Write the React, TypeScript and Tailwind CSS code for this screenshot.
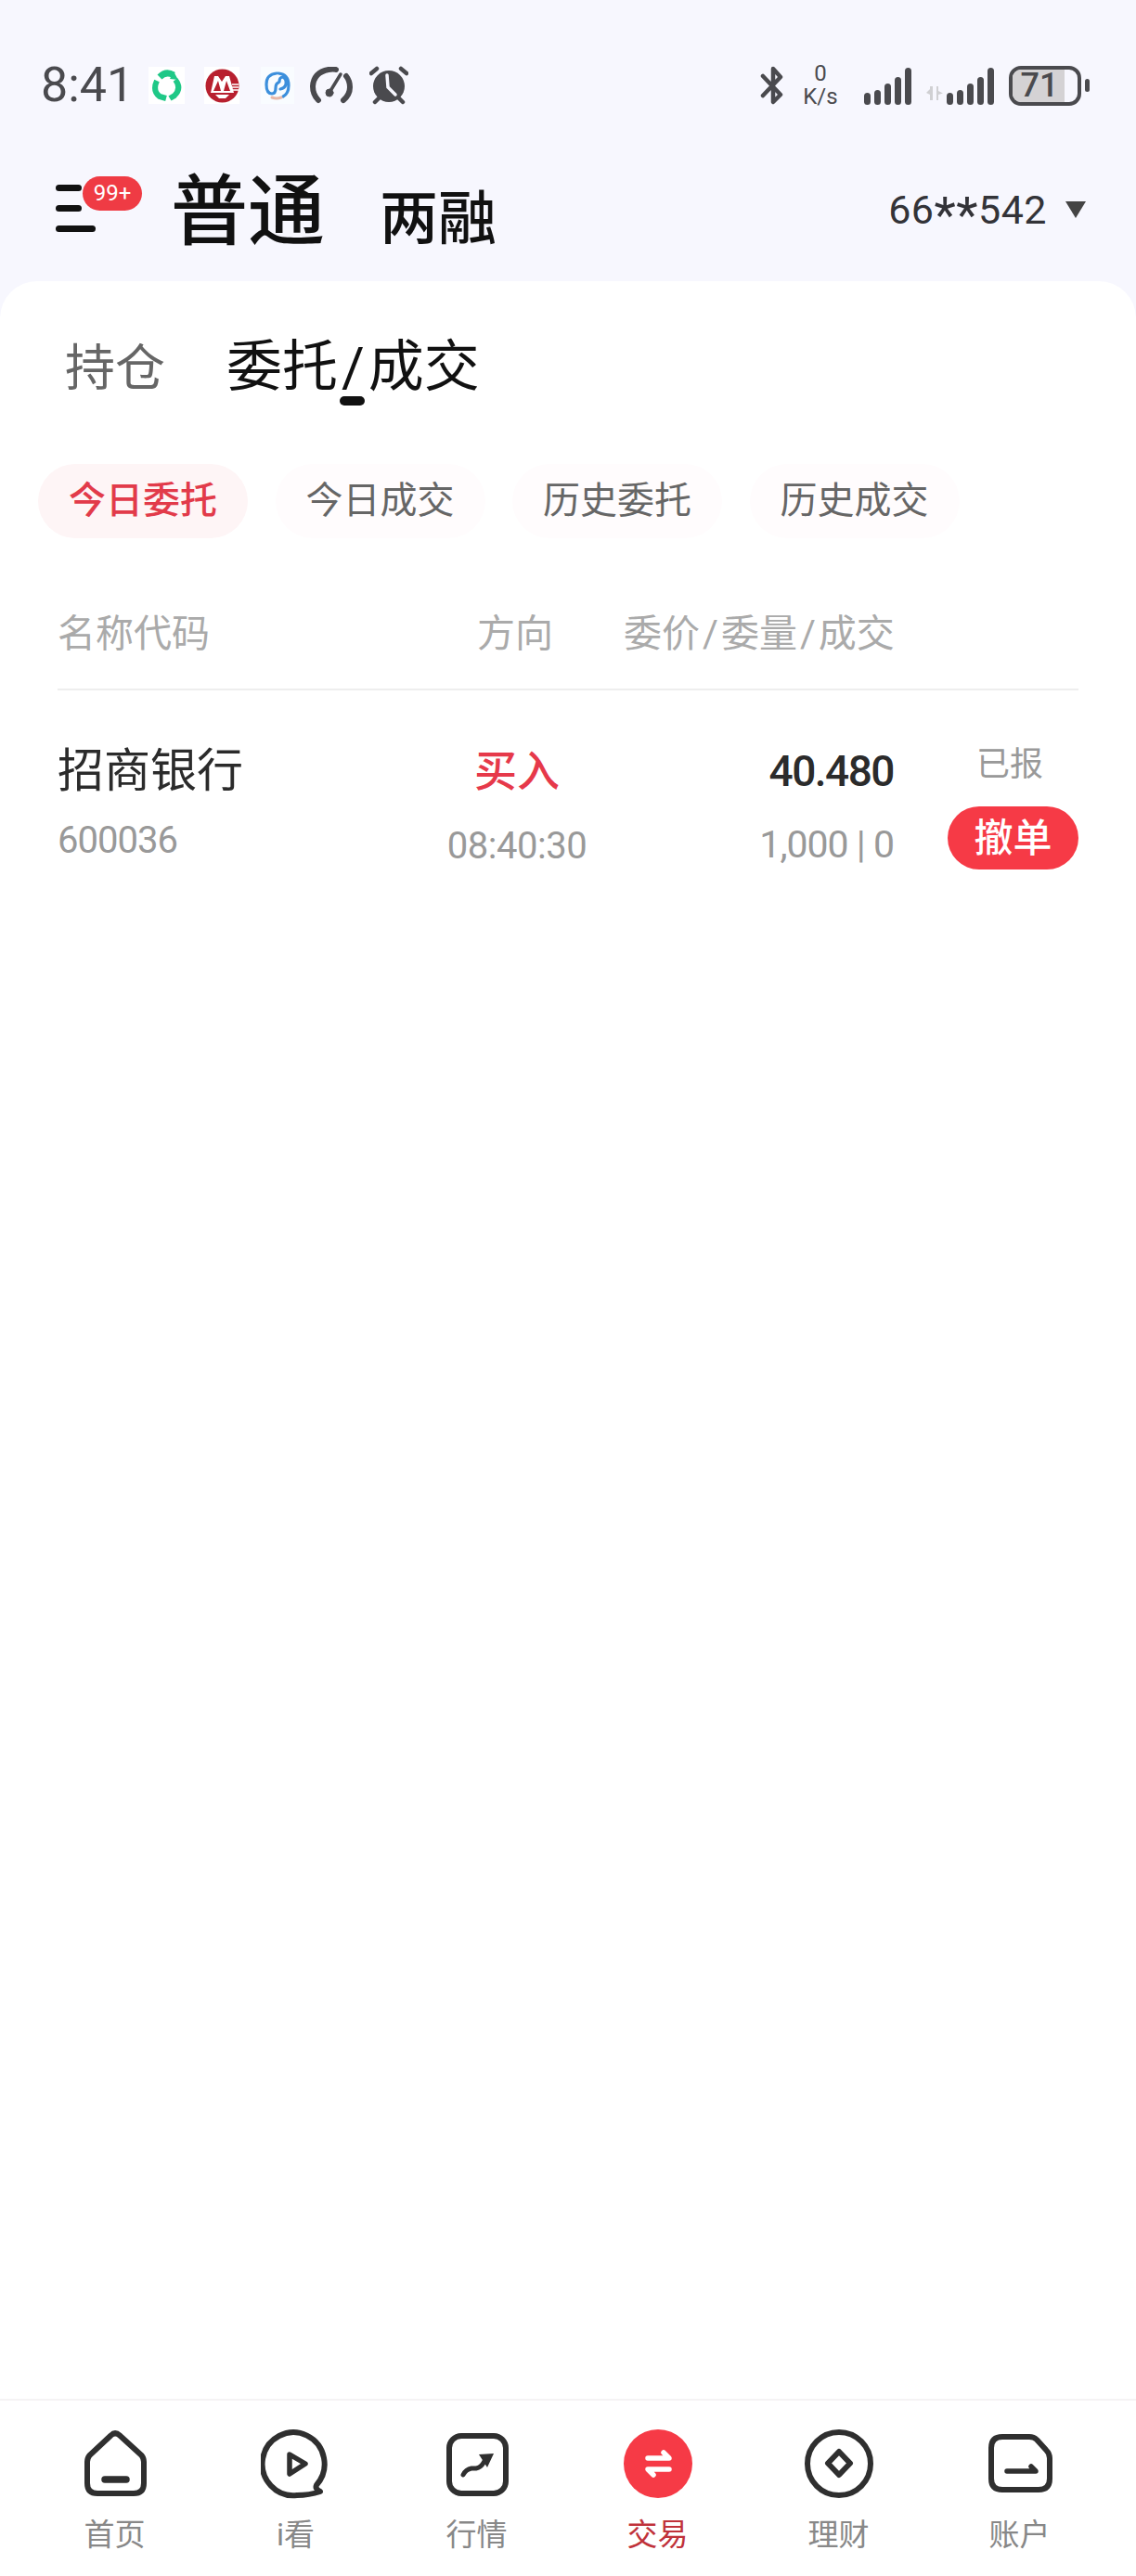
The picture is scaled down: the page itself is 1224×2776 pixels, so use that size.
import React from 'react';

function GreenLogo() {
  return (
    <div className="w-[39px] h-[40px] bg-white flex items-center justify-center">
      <svg width="34" height="36" viewBox="0 0 34 36" fill="none" stroke="#1fc887" strokeLinecap="butt">
        <path d="M9 9 Q16 2 24 7" strokeWidth="7" />
        <path d="M26 12 Q33 21 25 29 L20 32" strokeWidth="6" />
        <path d="M6 13 Q1 24 9 30 L16 32" strokeWidth="6" />
        <path d="M24 3 L29 12 L20 11 Z" fill="#1fc887" stroke="none" />
      </svg>
    </div>
  );
}

function CmbLogo() {
  return (
    <div className="w-[38px] h-[40px] bg-white flex items-center justify-center">
      <svg width="37" height="37" viewBox="0 0 37 37">
        <circle cx="18.5" cy="18.5" r="18" fill="#b8202f" />
        <path d="M10 8 H14 L18 14 L22 8 H26 L31 26 H6 Z" fill="#fff" />
        <path d="M9 24 L14 13 L17 24 Z M20 24 L23 13 L27 24 Z" fill="#b8202f" />
        <path d="M11 28 H26 L22 32 H15 Z" fill="#fff" />
        <path d="M29 17 H36 M29 20 H36 M30 23 H36" stroke="#fff" strokeWidth="1.3" />
      </svg>
    </div>
  );
}

function BlueLogo() {
  return (
    <div className="w-[36px] h-[40px] bg-[#f9fcff] flex items-center justify-center">
      <svg width="32" height="34" viewBox="0 0 32 34" fill="none" strokeLinecap="round">
        <path d="M15 4 Q4 5 4 16 Q4 26 10 26 Q14 26 14 20 Q14 15 17 14" stroke="#3c8fdc" strokeWidth="3.2" />
        <path d="M17 4 Q28 5 28 17 Q28 26 22 29 M22 8 Q18 8 18 13 M22 8 Q26 10 25 16 Q24 20 19 21" stroke="#3c8fdc" strokeWidth="3.2" />
        <path d="M10 30 Q15 32 20 30" stroke="#e8b8a8" strokeWidth="3" />
      </svg>
    </div>
  );
}

function Gauge() {
  return (
    <svg width="46" height="40" viewBox="0 0 46 40" fill="none" stroke="#4a4a4e" strokeLinecap="round">
      <path d="M9 36 Q3 30 3 21 Q4 6 20 3 Q25 2 28 3" strokeWidth="6" />
      <path d="M39 10 Q43 15 43 22 Q43 30 36 36" strokeWidth="6" />
      <path d="M22 26 L33 8" strokeWidth="3.5" />
      <circle cx="21" cy="28" r="4" fill="#4a4a4e" strokeWidth="1" />
    </svg>
  );
}

function Alarm() {
  return (
    <svg width="42" height="42" viewBox="0 0 42 42" fill="none" strokeLinecap="round">
      <circle cx="21" cy="22" r="17" fill="#4a4a4e" />
      <path d="M2 8 L8 3 M40 8 L34 3 M6 39 L10 35 M36 39 L32 35" stroke="#4a4a4e" strokeWidth="4.5" />
      <path d="M19 10 L20 23 L28 31" stroke="#f7f7fe" strokeWidth="3.5" />
    </svg>
  );
}

function Bluetooth() {
  return (
    <svg width="25" height="42" viewBox="0 0 25 42" fill="none" stroke="#4a4a4e" strokeWidth="4.5" strokeLinecap="round" strokeLinejoin="round">
      <path d="M3 11 L22 31 L14 39 V3 L22 12 L3 32" />
    </svg>
  );
}

function Signal() {
  return (
    <div className="flex items-end gap-[4px] h-[41px]">
      <div className="w-[7px] h-[13px] rounded-full bg-[#4a4a4e]" />
      <div className="w-[7px] h-[16px] rounded-full bg-[#4a4a4e]" />
      <div className="w-[7px] h-[23px] rounded-full bg-[#4a4a4e]" />
      <div className="w-[7px] h-[30px] rounded-full bg-[#4a4a4e]" />
      <div className="w-[7px] h-[40px] rounded-full bg-[#4a4a4e]" />
    </div>
  );
}

function StatusBar() {
  return (
    <div className="h-[60px] mt-[62px] pl-[44px] pr-[50px] flex items-center justify-between text-[#4a4a4e]">
      <div className="flex items-center">
        <span className="text-[52px] leading-[60px] w-[116px]">8:41</span>
        <div className="flex items-center">
          <GreenLogo />
          <div className="ml-[21px]"><CmbLogo /></div>
          <div className="ml-[23px]"><BlueLogo /></div>
          <div className="ml-[17px]"><Gauge /></div>
          <div className="ml-[18px]"><Alarm /></div>
        </div>
      </div>
      <div className="flex items-center">
        <Bluetooth />
        <div className="ml-[20px] w-[40px] flex flex-col items-center text-[24px] leading-[25px]">
          <span>0</span>
          <span className="text-[24px]">K/s</span>
        </div>
        <div className="ml-[27px]"><Signal /></div>
        <div className="self-end mb-[9px] ml-[16px] w-[18px] h-[15px] mr-[4px] flex items-center justify-center">
          <svg width="18" height="15" viewBox="0 0 18 15" fill="#d0d0d3">
            <path d="M4 0 V15 H7 V0Z M11 0 V15 H13 V9 L18 7.5 L13 5 V0Z M0 7 L4 3 V9Z" />
          </svg>
        </div>
        <Signal />
        <div className="ml-[16px] w-[78px] h-[43px] rounded-[13px] border-[4px] border-[#4a4a4e] overflow-hidden">
          <div className="h-full w-[56px] bg-[#d4d2d4] flex items-center justify-center text-[36px] leading-none pl-[2px] font-medium">
            71
          </div>
        </div>
        <div className="ml-[4px] w-[5px] h-[14px] rounded-full bg-[#4a4a4e]" />
      </div>
    </div>
  );
}

function TopNav() {
  return (
    <div className="h-[181px] pl-[60px] pr-[54px] pt-[57px] flex items-start justify-between">
      <div className="flex items-baseline">
        <div className="relative w-[124px] h-[60px] self-start mt-[20px] flex flex-col gap-[15px]">
          <div className="w-[28px] h-[7px] rounded-full bg-[#111]" />
          <div className="w-[28px] h-[7px] rounded-full bg-[#111]" />
          <div className="w-[43px] h-[7px] rounded-full bg-[#111]" />
          <div className="absolute left-[29px] top-[-9px] w-[64px] h-[37px] rounded-full bg-[#ef3b44] text-white text-[24px] leading-[37px] text-center">
            99+
          </div>
        </div>
        <span className="text-[83px] leading-[100px] font-medium text-[#111]">普通</span>
        <span className="ml-[59px] text-[63px] leading-[100px] font-medium text-[#111]">两融</span>
      </div>
      <div className="flex items-center mt-[17px]">
        <span className="text-[43px] leading-[52px] text-[#333338] tracking-[0.5px]">
          66
          <span className="relative top-[9px] text-[54px] leading-none">**</span>
          542
        </span>
        <svg className="ml-[20px] mt-[3px]" width="22" height="18" viewBox="0 0 22 18">
          <path d="M0 0 H22 L11 18 Z" fill="#444" />
        </svg>
      </div>
    </div>
  );
}

function FilterPill({ label, active }: { label: string; active?: boolean }) {
  return (
    <div
      className={`w-[226px] h-[80px] rounded-full flex items-center justify-center text-[40px] ${
        active ? 'bg-[#fef5f6] text-[#e23b4a] font-medium' : 'bg-[#fffcfd] text-[#666]'
      }`}
    >
      {label}
    </div>
  );
}

function OrderRow() {
  return (
    <div className="flex px-[62px] pt-[52px]">
      <div className="w-[400px]">
        <div className="text-[50px] leading-[70px] text-[#2b2b2b]">招商银行</div>
        <div className="mt-[17px] text-[40px] leading-[46px] tracking-[-1px] text-[#999]">600036</div>
      </div>
      <div className="w-[190px] flex flex-col items-center">
        <div className="text-[46px] leading-[70px] font-medium text-[#e6394a]">买入</div>
        <div className="mt-[23px] text-[40px] leading-[46px] tracking-[-0.5px] text-[#999]">08:40:30</div>
      </div>
      <div className="w-[311px] flex flex-col items-end">
        <div className="text-[46px] leading-[70px] font-medium tracking-[-1.5px] text-[#2b2b2b]">40.480</div>
        <div className="mt-[21px] text-[41px] leading-[46px] tracking-[-1px] text-[#999]">1,000 | 0</div>
      </div>
      <div className="flex-1 flex flex-col items-end pt-[3px]">
        <div className="w-[141px] pr-[7px] text-center text-[36px] leading-[50px] text-[#999]">已报</div>
        <button className="mt-[20px] w-[141px] h-[68px] rounded-full bg-[#f63a46] text-white text-[42px] font-medium flex items-center justify-center">
          撤单
        </button>
      </div>
    </div>
  );
}

const iconStroke = {
  fill: 'none',
  stroke: '#2f2f2f',
  strokeWidth: 6,
  strokeLinecap: 'round' as const,
  strokeLinejoin: 'round' as const,
};

const tabIcons: Record<string, React.ReactNode> = {
  home: (
    <g {...iconStroke}>
      <path d="M33.5 7.5 L10.5 29 Q8 32 8 36 V59 Q8 70 19 70 H58 Q69 70 69 59 V36 Q69 32 66.5 29 L43 7.5 Q38 3 33.5 7.5Z" />
      <path d="M27 55 H50" strokeWidth="7.5" />
    </g>
  ),
  watch: (
    <g {...iconStroke}>
      <path d="M60 61 A33.5 34 0 1 0 39 72 Q52 72 64 68 Q58 65 60 61Z" />
      <path d="M31 28 L48 38 L31 49 Z" strokeWidth="5.5" />
    </g>
  ),
  market: (
    <g {...iconStroke}>
      <rect x="8" y="8" width="61" height="62" rx="13" />
      <path d="M23 50 Q26 44 32 43 H37 Q42 42 45 37 L48 31" strokeWidth="5" />
      <path d="M40 28 L56 27 L49 42 Z" fill="#2f2f2f" stroke="none" />
    </g>
  ),
  trade: (
    <g>
      <circle cx="38" cy="38" r="37" fill="#f63a46" />
      <g fill="none" stroke="#fff" strokeWidth="5.5" strokeLinecap="round" strokeLinejoin="round">
        <path d="M27 32 H50 L44 26" />
        <path d="M50 44 H27 L33 50" />
      </g>
    </g>
  ),
  finance: (
    <g {...iconStroke}>
      <circle cx="38" cy="38" r="34" />
      <path d="M38 25 L50 37.5 L38 50 L26 37.5Z" />
    </g>
  ),
  account: (
    <g {...iconStroke}>
      <path d="M19 9 H48 Q53 9 56 12 L66 23 Q70 27 70 32 V54 Q70 66 58 66 H19 Q7 66 7 54 V21 Q7 9 19 9Z" />
      <path d="M24 46 H55 L50 41" strokeWidth="5.5" />
    </g>
  ),
};

const tabs = [
  { key: 'home', label: '首页' },
  { key: 'watch', label: 'i看' },
  { key: 'market', label: '行情' },
  { key: 'trade', label: '交易', active: true },
  { key: 'finance', label: '理财' },
  { key: 'account', label: '账户' },
];

function BottomNav() {
  return (
    <div className="h-[191px] border-t-[2px] border-[#f5f3f4] pl-[26px] pr-[28px] pt-[30px] grid grid-cols-6 bg-white">
      {tabs.map((t) => (
        <div key={t.key} className="flex flex-col items-center">
          <svg width="76" height="76" viewBox="0 0 76 76">
            {tabIcons[t.key]}
          </svg>
          <span className={`mt-[19px] text-[33px] leading-[40px] ${t.active ? 'text-[#c0323a]' : 'text-[#888]'}`}>
            {t.label}
          </span>
        </div>
      ))}
    </div>
  );
}

export default function App() {
  return (
    <div className="w-[1224px] h-[2776px] flex flex-col overflow-hidden bg-[#f7f7fe] font-['Roboto','Noto_Sans_CJK_SC',sans-serif]">
      <StatusBar />
      <TopNav />

      {/* Main card */}
      <div className="flex-1 rounded-t-[40px] bg-white">
        <div className="pl-[70px] pt-[55px] flex items-baseline gap-[66px]">
          <span className="text-[54px] leading-[76px] text-[#666]">持仓</span>
          <div className="relative text-[60px] leading-[76px] text-[#111]">
            委托<span className="mx-[4px]">/</span>成交
            <div className="absolute left-[122px] top-[69px] w-[27px] h-[10px] rounded-full bg-[#111]" />
          </div>
        </div>

        <div className="mt-[64px] pl-[41px] flex gap-[29.5px]">
          <FilterPill label="今日委托" active />
          <FilterPill label="今日成交" />
          <FilterPill label="历史委托" />
          <FilterPill label="历史成交" />
        </div>

        <div className="mt-[75px] mx-[62px] h-[89px] border-b-[2px] border-[#eee] flex text-[41px] leading-[56px] text-[#aaa]">
          <span className="w-[452px]">名称代码</span>
          <span className="w-[158px]">方向</span>
          <span>
            委价<span className="mx-[3px]">/</span>委量<span className="mx-[3px]">/</span>成交
          </span>
        </div>

        <OrderRow />
      </div>

      <BottomNav />
    </div>
  );
}
